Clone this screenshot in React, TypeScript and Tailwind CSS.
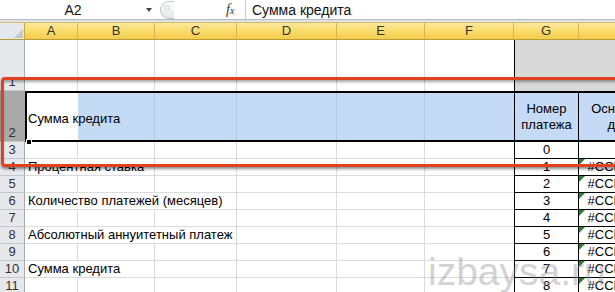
import React from "react";

const headCols = [
  { l: "A", w: "w-[53px]" },
  { l: "B", w: "w-[77px]" },
  { l: "C", w: "w-[82px]" },
  { l: "D", w: "w-[100px]" },
  { l: "E", w: "w-[88px]" },
  { l: "F", w: "w-[89px]" },
  { l: "G", w: "w-[65px]" },
  { l: "", w: "w-[84px]" },
];

const afWidths = ["w-[53px]", "w-[77px]", "w-[82px]", "w-[100px]", "w-[88px]", "w-[89px]"];

type Lower = { n: number; a?: string; span?: "w-[130px]" | "w-[212px]"; skip?: number; g: string; err: boolean };

const lower: Lower[] = [
  { n: 3, g: "0", err: false },
  { n: 4, a: "Процентная ставка", span: "w-[130px]", skip: 2, g: "1", err: true },
  { n: 5, g: "2", err: true },
  { n: 6, a: "Количество платежей (месяцев)", span: "w-[212px]", skip: 3, g: "3", err: true },
  { n: 7, g: "4", err: true },
  { n: 8, a: "Абсолютный аннуитетный платеж", span: "w-[212px]", skip: 3, g: "5", err: true },
  { n: 9, g: "6", err: true },
  { n: 10, a: "Сумма кредита", span: "w-[130px]", skip: 2, g: "7", err: true },
  { n: 11, g: "8", err: true },
];

function RowHead({ n, dark }: { n: number; dark?: boolean }) {
  return (
    <div
      className={
        "flex w-[25px] shrink-0 items-end justify-center border-r border-b border-r-[#a7abb1] border-b-[#c4c7cb] pb-[1px] text-[13px] leading-[15px] text-[#333] " +
        (dark ? "bg-[#a9a9a9]" : "bg-[#e6e8eb]")
      }
    >
      {n}
    </div>
  );
}

function ErrMark() {
  return (
    <svg className="absolute left-0 top-0" width="6" height="6" viewBox="0 0 6 6">
      <polygon points="0,0 6,0 0,6" fill="#2e7d32" />
    </svg>
  );
}

export default function App() {
  return (
    <div className="relative h-[292px] w-[615px] overflow-hidden bg-white text-black font-['Liberation_Sans',Arial,sans-serif]">
      {/* formula bar */}
      <div className="flex h-[20px] items-center border-b border-[#b3bac4] bg-white">
        <div className="w-[146px] text-center text-[14px] leading-none text-[#111]">A2</div>
        <div className="h-0 w-0 border-x-[3px] border-t-[4px] border-x-transparent border-t-[#444]" />
        <div className="w-[8px]" />
        <div className="relative h-[18px] w-[14px] rounded-l-full border border-r-0 border-[#bfc4ca] bg-linear-to-b from-white to-[#e2e5e9]">
          <div className="absolute left-[3px] top-[3px] h-[5px] w-[6px] rounded-full border border-[#cfd3d8] bg-[#f3f4f6]" />
        </div>
        <div className="w-[52px]" />
        <div className="w-[14px] font-['Liberation_Serif',serif] text-[14px] italic leading-none text-[#333]">
          f<span className="text-[10px]">x</span>
        </div>
        <div className="w-[5px]" />
        <div className="h-full w-px bg-[#c8ccd2]" />
        <div className="pl-[6px] text-[14px] leading-none text-[#111]">Сумма кредита</div>
      </div>
      <div className="h-[2px] bg-[#dfe3e8]" />

      {/* column headers */}
      <div className="flex h-[18px] border-y border-t-[#d4bd6a] border-b-[#b99d38]">
        <div className="relative w-[25px] shrink-0 border-r border-[#c9a940] bg-[#e4e7eb]">
          <svg className="absolute left-[14px] top-[6px]" width="9" height="9" viewBox="0 0 9 9">
            <polygon points="9,0 9,9 0,9" fill="#c3c6ca" />
          </svg>
        </div>
        {headCols.map((c, i) => (
          <div
            key={i}
            className={
              c.w +
              " shrink-0 border-r border-[#d7b650] bg-linear-to-b from-[#fce89c] via-[#f9dc6c] to-[#f4cb4c] text-center text-[13px] leading-[16px] text-[#333]"
            }
          >
            {c.l}
          </div>
        ))}
      </div>

      {/* row 1 */}
      <div className="flex h-[51px]">
        <RowHead n={1} />
        {afWidths.map((w, i) => (
          <div key={i} className={w + " shrink-0 " + (i < 5 ? "border-r border-[#d9dbde]" : "")} />
        ))}
        <div className="w-[65px] shrink-0 border-l border-black bg-[#d9d9d9]" />
        <div className="w-[84px] shrink-0 bg-[#d9d9d9]" />
      </div>

      {/* row 2 (selected) */}
      <div className="relative flex h-[51px]">
        <RowHead n={2} dark />
        <div className="flex border-y-2 border-black">
          <div className="flex w-[53px] shrink-0 items-center border-l-2 border-black bg-white pl-[1px] pt-[4px]">
            <span className="relative z-10 whitespace-nowrap text-[13px] leading-none">Сумма кредита</span>
          </div>
          {afWidths.slice(1).map((w, i) => (
            <div key={i} className={w + " shrink-0 bg-[#c4daf5] " + (i < 4 ? "border-r border-[#b7c9de]" : "")} />
          ))}
          <div className="flex w-[65px] shrink-0 flex-col items-center justify-center border-x border-black bg-[#c4daf5] text-[13px] leading-[16px]">
            <span>Номер</span>
            <span>платежа</span>
          </div>
          <div className="flex w-[84px] shrink-0 flex-col items-center justify-center bg-[#c4daf5] text-[13px] leading-[16px]">
            <span>Основной</span>
            <span>долг</span>
          </div>
        </div>
        <div className="absolute left-[26px] bottom-[-3px] z-20 h-[6px] w-[6px] border border-white bg-black" />
      </div>

      {/* rows 3..11 */}
      {lower.map((r) => (
        <div key={r.n} className="flex h-[17px]">
          <RowHead n={r.n} />
          {r.a ? (
            <div className={r.span + " shrink-0 border-r border-b border-[#d9dbde] pl-[3px] text-[13px] leading-[16px] whitespace-nowrap"}>
              {r.a}
            </div>
          ) : null}
          {afWidths.slice(r.a ? r.skip : 0).map((w, i, arr) => (
            <div
              key={i}
              className={w + " shrink-0 border-b border-[#d9dbde] " + (i < arr.length - 1 ? "border-r" : "")}
            />
          ))}
          <div className="w-[65px] shrink-0 border-x border-b border-black text-center text-[13px] leading-[16px]">
            {r.g}
          </div>
          <div className="relative w-[84px] shrink-0 border-r border-b border-black text-center text-[13px] leading-[16px]">
            {r.err ? (
              <>
                <ErrMark />
                #ССЫЛКА!
              </>
            ) : null}
          </div>
        </div>
      ))}

      {/* red highlight frame */}
      <div className="pointer-events-none absolute left-[1px] top-[77px] h-[90px] w-[660px] rounded-[4px] border-[3px] border-[#e2411f] shadow-[0_2px_3px_rgba(0,0,0,0.45),inset_0_3px_3px_-1px_rgba(0,0,0,0.35)]" />

      {/* watermark */}
      <div className="pointer-events-none absolute left-[428px] top-[252px] text-[39px] leading-none text-[rgba(140,140,140,0.4)]">
        izbaysa.ru
      </div>
    </div>
  );
}
